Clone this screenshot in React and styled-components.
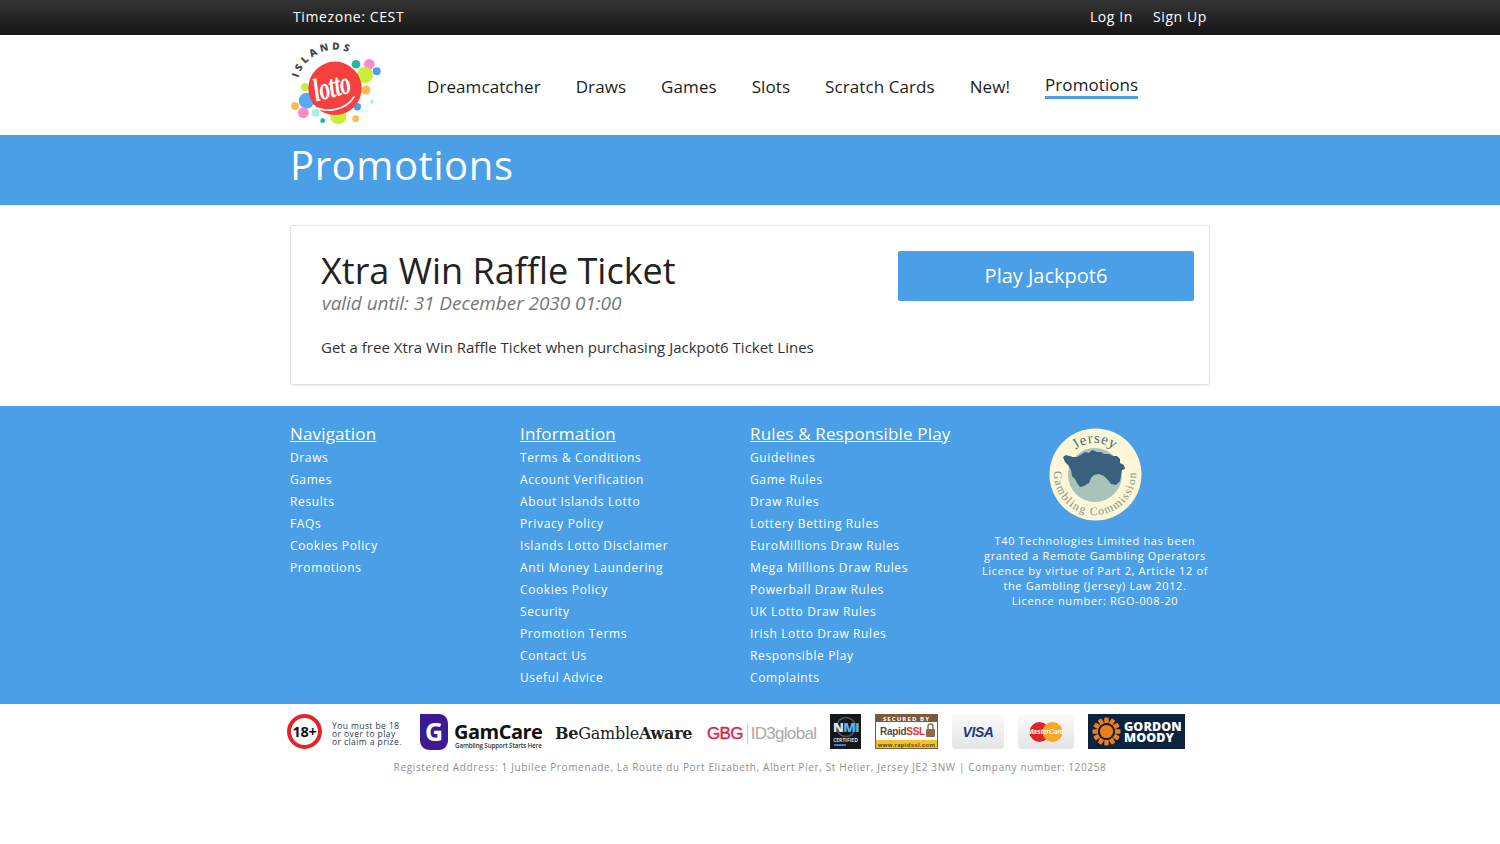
import React from 'react';
import styled, { createGlobalStyle } from 'styled-components';

const BLUE = '#4a9fe6';

const navItems = ['Dreamcatcher', 'Draws', 'Games', 'Slots', 'Scratch Cards', 'New!', 'Promotions'];

const footerColumns = [
  {
    title: 'Navigation',
    links: ['Draws', 'Games', 'Results', 'FAQs', 'Cookies Policy', 'Promotions'],
  },
  {
    title: 'Information',
    links: [
      'Terms & Conditions',
      'Account Verification',
      'About Islands Lotto',
      'Privacy Policy',
      'Islands Lotto Disclaimer',
      'Anti Money Laundering',
      'Cookies Policy',
      'Security',
      'Promotion Terms',
      'Contact Us',
      'Useful Advice',
    ],
  },
  {
    title: 'Rules & Responsible Play',
    links: [
      'Guidelines',
      'Game Rules',
      'Draw Rules',
      'Lottery Betting Rules',
      'EuroMillions Draw Rules',
      'Mega Millions Draw Rules',
      'Powerball Draw Rules',
      'UK Lotto Draw Rules',
      'Irish Lotto Draw Rules',
      'Responsible Play',
      'Complaints',
    ],
  },
];

// bubbles round the logo: x, y, r, colour
const bubbles = [
  [66, 24.3, 4.3, '#1fb89a'],
  [79.3, 24.3, 5.4, '#f78dc4'],
  [86.7, 31.3, 4, '#4a9fe8'],
  [75, 35, 8, '#c9ee3c'],
  [76, 50, 4.5, '#fdbb4e'],
  [15, 47.3, 4, '#c9ee3c'],
  [16.7, 60.7, 8, '#57abf0'],
  [67.3, 66.7, 3.7, '#4a9fe8'],
  [81.7, 61.7, 2, '#a2f2ea'],
  [5, 66, 4, '#fdbb4e'],
  [13.3, 72.7, 5.4, '#f78dc4'],
  [25.7, 72.7, 4, '#a2f2ea'],
  [32.7, 80.7, 2.4, '#1fb89a'],
  [48.3, 76, 8.3, '#c9ee3c'],
  [65.7, 78.7, 3.4, '#fdbb4e'],
];

const GlobalStyle = createGlobalStyle`
  html, body {
    margin: 0;
    padding: 0;
    background: #fff;
    font-family: "Open Sans", "Liberation Sans", sans-serif;
  }
  a {
    color: inherit;
    text-decoration: none;
  }
`;

const Container = styled.div`
  width: 920px;
  margin: 0 auto;
`;

const TopBar = styled.div`
  height: 35px;
  background: linear-gradient(to bottom, #353535, #151515);
  color: #fff;
  font-size: 14px;
  line-height: 34px;
  letter-spacing: 0.6px;
`;

const TopInner = styled(Container)`
  display: flex;
  justify-content: space-between;
  padding: 0 3px;
  box-sizing: border-box;
`;

const TopLinks = styled.div`
  display: flex;
  gap: 20px;
`;

const Header = styled.header`
  height: 100px;
`;

const HeaderInner = styled(Container)`
  display: flex;
  align-items: center;
  height: 100%;
`;

const LogoWrap = styled.div`
  flex: none;
  align-self: flex-start;
  width: 92px;
  height: 84px;
  margin-top: 5px;

  svg {
    overflow: visible;
  }
`;

const Nav = styled.nav`
  display: flex;
  align-items: center;
  gap: 35px;
  margin-left: 45px;
  margin-top: 4px;
`;

const NavLink = styled.a`
  font-size: 17px;
  line-height: 24px;
  letter-spacing: 0.08px;
  color: #1c1c1c;
  ${({ $active }) =>
    $active &&
    `
    border-bottom: 3px solid ${BLUE};
    line-height: 23px;
    margin-bottom: 1px;
    margin-top: -2px;
  `}
`;

const TitleBand = styled.div`
  height: 70px;
  background: ${BLUE};
  color: #fff;
`;

const PageTitle = styled.h1`
  margin: 0;
  font-size: 40px;
  font-weight: 400;
  line-height: 60px;
  letter-spacing: 0.6px;
`;

const Card = styled.section`
  box-sizing: border-box;
  width: 920px;
  height: 160px;
  margin: 20px auto 21px;
  padding: 25px 15px 0 30px;
  border: 1px solid #e2e2e2;
  border-radius: 3px;
  box-shadow: 0 1px 2px rgba(0, 0, 0, 0.08);
  display: flex;
  justify-content: space-between;
  align-items: flex-start;
`;

const CardTitle = styled.h2`
  margin: -1px 0 0;
  font-size: 36px;
  font-weight: 400;
  line-height: 42px;
  color: #222;
`;

const Valid = styled.div`
  margin: 0 0 0 1px;
  font-size: 19px;
  font-style: italic;
  line-height: 22px;
  letter-spacing: -0.06px;
  color: #777;
`;

const CardText = styled.p`
  margin: 22px 0 0;
  font-size: 15px;
  line-height: 22px;
  color: #333;
`;

const PlayButton = styled.a`
  width: 296px;
  height: 50px;
  background: ${BLUE};
  border-radius: 2px;
  color: #fff;
  font-size: 20px;
  line-height: 50px;
  text-align: center;
`;

const Footer = styled.footer`
  height: 298px;
  background: ${BLUE};
  color: #fff;
`;

const FooterGrid = styled(Container)`
  display: grid;
  grid-template-columns: repeat(4, 230px);
  padding-top: 16px;
`;

const ColumnTitle = styled.a`
  display: block;
  font-size: 17px;
  line-height: 23px;
  margin-bottom: 2px;
  text-decoration: underline;
  letter-spacing: 0.15px;
`;

const FooterLink = styled.a`
  display: block;
  font-size: 12px;
  line-height: 22px;
  letter-spacing: 0.62px;
`;

const LicenceBox = styled.div`
  display: flex;
  flex-direction: column;
  align-items: center;
  margin-top: 6px;
`;

const SealWrap = styled.div`
  width: 93px;
  height: 93px;
`;

const LicenceText = styled.p`
  margin: 12px 0 0;
  font-size: 11px;
  line-height: 15px;
  letter-spacing: 0.65px;
  text-align: center;
  white-space: nowrap;
`;

const LogoRow = styled.div`
  width: 926px;
  margin: 10px auto 0;
  height: 35px;
  display: flex;
  align-items: center;
`;

const LogoSlot = styled.div`
  flex: none;
  width: ${({ $w }) => $w}px;
  margin-right: ${({ $gap }) => $gap}px;
  height: ${({ $h }) => $h || 35}px;
`;

const AgeBadge = styled.div`
  flex: none;
  box-sizing: border-box;
  width: 35px;
  height: 35px;
  border: 4px solid #e3242b;
  border-radius: 50%;
  font-size: 14.5px;
  font-weight: 700;
  line-height: 27px;
  letter-spacing: -0.3px;
  text-align: center;
  color: #111;
`;

const AgeText = styled.div`
  flex: none;
  width: 70px;
  margin: 4px 18px 0 10px;
  font-size: 8.5px;
  line-height: 8px;
  letter-spacing: 0.42px;
  color: #2c3a50;
  white-space: nowrap;
`;

const BeGamble = styled.div`
  flex: none;
  width: 138px;
  margin-right: 14px;
  margin-top: 4px;
  font-family: "DejaVu Serif", "Liberation Serif", serif;
  font-size: 16px;
  letter-spacing: -0.25px;
  color: #222;
  white-space: nowrap;
  b {
    font-weight: 700;
  }
`;

const Gbg = styled.div`
  flex: none;
  display: flex;
  align-items: center;
  width: 110px;
  margin-right: 13px;
  margin-top: 4px;
  font-family: "Liberation Sans", sans-serif;
  font-size: 17px;
  letter-spacing: -0.7px;
  color: #a9a9a9;
  white-space: nowrap;
`;

const GbgMark = styled.span`
  color: #d9244f;
  padding-right: 4px;
  margin-right: 3px;
  border-right: 1px solid #ccc;
  -webkit-text-stroke: 0.4px #d9244f;
`;

const CardLogo = styled.div`
  flex: none;
  box-sizing: border-box;
  width: ${({ $w }) => $w}px;
  height: 35px;
  margin-right: 14px;
  border-radius: 4px;
  background: linear-gradient(to bottom, #fbfbfb, #e4e4e4);
  display: flex;
  align-items: center;
  justify-content: center;
`;

const VisaText = styled.span`
  font-family: "Liberation Sans", sans-serif;
  font-size: 14px;
  font-weight: 700;
  font-style: italic;
  letter-spacing: -0.4px;
  color: #1c3a80;
`;

const GordonMoody = styled.div`
  flex: none;
  width: 97px;
  height: 35px;
  background: #0c2340;
  display: flex;
  align-items: center;
  gap: 3px;
  padding-left: 4px;
  box-sizing: border-box;
`;

const GordonText = styled.div`
  font-size: 12.5px;
  font-weight: 800;
  line-height: 11px;
  letter-spacing: 0.1px;
  color: #fff;
`;

const Address = styled.p`
  margin: 11px 0 0;
  font-size: 10px;
  line-height: 14px;
  letter-spacing: 0.645px;
  color: #8e8e8e;
  text-align: center;
`;

const IslandsLogo = () => (
  <svg width="92" height="84" viewBox="0 0 92 84">
    <defs>
      <path id="islandsArc" d="M8.3 38 A38 38 0 0 1 66 16" fill="none" />
    </defs>
    <text fontFamily="Open Sans, sans-serif" fontSize="10" fontWeight="800" fill="#4a4a4a" letterSpacing="3.2">
      <textPath href="#islandsArc">ISLANDS</textPath>
    </text>
    {bubbles.map(([x, y, r, fill]) => (
      <circle key={`${x}-${y}`} cx={x} cy={y} r={r} fill={fill} />
    ))}
    <circle cx="45" cy="48.3" r="26.7" fill="#f4403e" />
    <path d="M23 66 C 36 74, 56 70, 64 57" fill="none" stroke="#fff" strokeWidth="1.6" strokeLinecap="round" />
    <text
      fontFamily="Liberation Serif, serif"
      fontStyle="italic"
      fontSize="24"
      fontWeight="700"
      letterSpacing="-0.6"
      fill="#fff"
      textAnchor="middle"
      transform="translate(44 57) rotate(-14) scale(0.9 1.35)"
    >
      lotto
    </text>
  </svg>
);

const JerseySeal = () => (
  <svg width="93" height="93" viewBox="0 0 93 93">
    <defs>
      <path id="sealTop" d="M15 46 A31 31 0 0 1 77 46" fill="none" />
      <path id="sealBottom" d="M5 46 A41 41 0 0 0 87 46" fill="none" />
    </defs>
    <circle cx="46.5" cy="46.5" r="46" fill="#fdf7d8" />
    <circle cx="46" cy="47" r="27" fill="#a9c3b8" />
    <path
      d="M14 29 L17 27 L24 29 L28 29 L33 26 L36 24 L40 25 L43 22 L48 24 L52 24 L55 26 L60 26 L64 28 L68 28 L71 31 L71 35 L75 37 L76 41 L73 42 L72 47 L71 53 L67 57 L62 56 L59 52 L55 48 L50 46 L45 47 L42 50 L40 55 L35 58 L31 59 L28 55 L26 51 L23 48 L22 42 L19 37 L16 34 Z"
      fill="#3a607f"
    />
    <text fontFamily="Liberation Serif, serif" fontSize="15" fill="#4d6b7d" textAnchor="middle" letterSpacing="0.6">
      <textPath href="#sealTop" startOffset="50%">Jersey</textPath>
    </text>
    <text fontFamily="Liberation Serif, serif" fontSize="11.5" fill="#7d9590" textAnchor="middle" letterSpacing="1.4">
      <textPath href="#sealBottom" startOffset="50%">Gambling Commission</textPath>
    </text>
  </svg>
);

const GamCareLogo = () => (
  <svg width="123" height="36" viewBox="0 0 123 36">
    <path d="M0 0 H19 C24 0 28 4 28 10 V26 C28 32 24 36 19 36 H10 C4 36 0 32 0 26 Z" fill="#3b1a94" />
    <text x="14" y="27" textAnchor="middle" fontFamily="Open Sans, sans-serif" fontWeight="700" fontSize="25" fill="#fff">
      G
    </text>
    <text x="34" y="25" fontFamily="Open Sans, sans-serif" fontWeight="700" fontSize="20" letterSpacing="-0.5" fill="#111">
      GamCare
    </text>
    <text x="35" y="34" fontFamily="Open Sans, sans-serif" fontWeight="600" fontSize="6.2" letterSpacing="-0.1" fill="#333">
      Gambling Support Starts Here
    </text>
  </svg>
);

const NmiLogo = () => (
  <svg width="31" height="35" viewBox="0 0 31 35">
    <rect width="31" height="35" fill="#15171b" />
    <circle cx="16" cy="13" r="9.5" fill="none" stroke="#4a5a68" strokeWidth="1.5" />
    <text x="16" y="18" textAnchor="middle" fontFamily="Open Sans, sans-serif" fontWeight="800" fontSize="13" letterSpacing="-0.5" fill="#5fb0ee">
      <tspan fill="#dfe6ec">N</tspan>Mi
    </text>
    <text x="15.5" y="28" textAnchor="middle" fontFamily="Open Sans, sans-serif" fontWeight="700" fontSize="5" fill="#ddd">
      CERTIFIED
    </text>
    <rect x="4" y="30" width="12" height="2" fill="#2f7fd0" />
  </svg>
);

const RapidSslLogo = () => (
  <svg width="63" height="35" viewBox="0 0 63 35">
    <rect width="63" height="35" fill="#7c5a3c" />
    <rect x="1" y="8" width="61" height="18" fill="#fff" />
    <rect x="1" y="26" width="61" height="8" fill="#f6c22c" />
    <text x="31.5" y="6.5" textAnchor="middle" fontFamily="Open Sans, sans-serif" fontWeight="700" fontSize="6" letterSpacing="1.1" fill="#fff">
      SECURED BY
    </text>
    <text x="5" y="21" fontFamily="Liberation Sans, sans-serif" fontWeight="700" fontSize="10" letterSpacing="-0.3" fill="#5a4a3a">
      Rapid<tspan fill="#e0332a">SSL</tspan>
    </text>
    <rect x="51" y="15" width="9" height="8" rx="1" fill="#8b6a4a" />
    <path d="M53 15 V12.5 a2.5 2.5 0 0 1 5 0 V15" fill="none" stroke="#8b6a4a" strokeWidth="1.4" />
    <text x="31.5" y="32.5" textAnchor="middle" fontFamily="Liberation Sans, sans-serif" fontWeight="700" fontSize="6" letterSpacing="0.3" fill="#5a4418">
      www.rapidssl.com
    </text>
  </svg>
);

const MastercardMark = () => (
  <svg width="34" height="20" viewBox="0 0 34 20">
    <circle cx="10.5" cy="10" r="10" fill="#e0242c" />
    <circle cx="23.5" cy="10" r="10" fill="#f9a825" />
    <text x="17" y="12" textAnchor="middle" fontFamily="Liberation Sans, sans-serif" fontStyle="italic" fontWeight="700" fontSize="6.6" fill="#fff">
      MasterCard
    </text>
  </svg>
);

const GordonMark = () => {
  const petals = Array.from({ length: 12 }, (_, i) => i * 30);
  return (
    <svg width="29" height="29" viewBox="0 0 29 29" style={{ flex: 'none' }}>
      {petals.map((a) => (
        <rect key={a} x="12.3" y="0.5" width="4.4" height="6" rx="1" fill="#ef7d1a" transform={`rotate(${a} 14.5 14.5)`} />
      ))}
      <circle cx="14.5" cy="14.5" r="8.6" fill="#0c2340" />
      <circle cx="14.5" cy="14.5" r="6.6" fill="#ef7d1a" />
    </svg>
  );
};

const App = () => (
  <>
    <GlobalStyle />
    <TopBar>
      <TopInner>
        <span>Timezone: CEST</span>
        <TopLinks>
          <a href="#login">Log In</a>
          <a href="#signup">Sign Up</a>
        </TopLinks>
      </TopInner>
    </TopBar>

    <Header>
      <HeaderInner>
        <LogoWrap>
          <IslandsLogo />
        </LogoWrap>
        <Nav>
          {navItems.map((item) => (
            <NavLink key={item} href="#nav" $active={item === 'Promotions'}>
              {item}
            </NavLink>
          ))}
        </Nav>
      </HeaderInner>
    </Header>

    <TitleBand>
      <Container>
        <PageTitle>Promotions</PageTitle>
      </Container>
    </TitleBand>

    <Card>
      <div>
        <CardTitle>Xtra Win Raffle Ticket</CardTitle>
        <Valid>valid until: 31 December 2030 01:00</Valid>
        <CardText>Get a free Xtra Win Raffle Ticket when purchasing Jackpot6 Ticket Lines</CardText>
      </div>
      <PlayButton href="#play">Play Jackpot6</PlayButton>
    </Card>

    <Footer>
      <FooterGrid>
        {footerColumns.map((col) => (
          <div key={col.title}>
            <ColumnTitle href="#section">{col.title}</ColumnTitle>
            {col.links.map((link) => (
              <FooterLink key={link} href="#link">
                {link}
              </FooterLink>
            ))}
          </div>
        ))}
        <LicenceBox>
          <SealWrap>
            <JerseySeal />
          </SealWrap>
          <LicenceText>
            T40 Technologies Limited has been
            <br />
            granted a Remote Gambling Operators
            <br />
            Licence by virtue of Part 2, Article 12 of
            <br />
            the Gambling (Jersey) Law 2012.
            <br />
            Licence number: RGO-008-20
          </LicenceText>
        </LicenceBox>
      </FooterGrid>
    </Footer>

    <LogoRow>
      <AgeBadge>18+</AgeBadge>
      <AgeText>
        You must be 18
        <br />
        or over to play
        <br />
        or claim a prize.
      </AgeText>
      <LogoSlot $w={123} $gap={12} $h={36}>
        <GamCareLogo />
      </LogoSlot>
      <BeGamble>
        <b>Be</b>Gamble<b>Aware</b>
      </BeGamble>
      <Gbg>
        <GbgMark>GBG</GbgMark>ID3global
      </Gbg>
      <LogoSlot $w={31} $gap={14}>
        <NmiLogo />
      </LogoSlot>
      <LogoSlot $w={63} $gap={14}>
        <RapidSslLogo />
      </LogoSlot>
      <CardLogo $w={52}>
        <VisaText>VISA</VisaText>
      </CardLogo>
      <CardLogo $w={56}>
        <MastercardMark />
      </CardLogo>
      <GordonMoody>
        <GordonMark />
        <GordonText>
          GORDON
          <br />
          MOODY
        </GordonText>
      </GordonMoody>
    </LogoRow>

    <Address>
      Registered Address: 1 Jubilee Promenade, La Route du Port Elizabeth, Albert Pier, St Helier, Jersey JE2 3NW | Company number: 120258
    </Address>
  </>
);

export default App;
